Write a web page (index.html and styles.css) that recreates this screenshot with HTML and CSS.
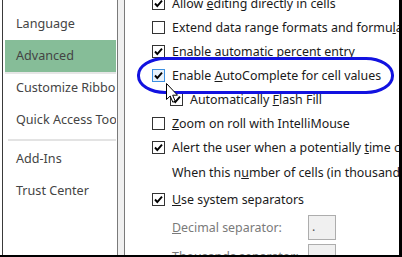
FILE: index.html
```html
<!DOCTYPE html>
<html lang="en">
<head>
    <meta charset="UTF-8">
    <title>Excel Options - Advanced</title>
<link rel="stylesheet" href="styles.css">
</head>
<body>
<div class="window">
    <nav class="nav">
        <div class="nav-item">Language</div>
        <div class="nav-item active">Advanced</div>
        <div class="nav-item">Customize Ribbon</div>
        <div class="nav-item">Quick Access Toolbar</div>
        <div class="nav-sep"></div>
        <div class="nav-item">Add-Ins</div>
        <div class="nav-item">Trust Center</div>
    </nav>
    <div class="split"></div>
    <main class="content">
        <div class="options">
            <div class="row">
                <svg class="box" viewBox="0 0 13 13"><rect x="0.5" y="0.5" width="12" height="12"/><path d="M3 6.5 L5.3 9 L10 3.6"/></svg>
                <span>Allow <u>e</u>diting directly in cells</span>
            </div>
            <div class="row">
                <svg class="box" viewBox="0 0 13 13"><rect x="0.5" y="0.5" width="12" height="12"/></svg>
                <span>Extend data range formats and formu<u>l</u>as</span>
            </div>
            <div class="row">
                <svg class="box" viewBox="0 0 13 13"><rect x="0.5" y="0.5" width="12" height="12"/><path d="M3 6.5 L5.3 9 L10 3.6"/></svg>
                <span>Enable automat<u>i</u>c percent entry</span>
            </div>
            <div class="row">
                <svg class="box hover" viewBox="0 0 13 13"><rect x="0.5" y="0.5" width="12" height="12"/><path d="M3 6.5 L5.3 9 L10 3.6"/></svg>
                <span>Enable <u>A</u>utoComplete for cell values</span>
            </div>
            <div class="row sub">
                <svg class="box" viewBox="0 0 13 13"><rect x="0.5" y="0.5" width="12" height="12"/><path d="M3 6.5 L5.3 9 L10 3.6"/></svg>
                <span>Automatically <u>F</u>lash Fill</span>
            </div>
            <div class="row">
                <svg class="box" viewBox="0 0 13 13"><rect x="0.5" y="0.5" width="12" height="12"/></svg>
                <span><u>Z</u>oom on roll with IntelliMouse</span>
            </div>
            <div class="row">
                <svg class="box" viewBox="0 0 13 13"><rect x="0.5" y="0.5" width="12" height="12"/><path d="M3 6.5 L5.3 9 L10 3.6"/></svg>
                <span>Alert the user when a potentially <u>t</u>ime consuming operation occurs</span>
            </div>
            <div class="row tall plain">
                <span>When this n<u>u</u>mber of cells (in thousands) is affected:</span>
            </div>
            <div class="row tall">
                <svg class="box" viewBox="0 0 13 13"><rect x="0.5" y="0.5" width="12" height="12"/><path d="M3 6.5 L5.3 9 L10 3.6"/></svg>
                <span><u>U</u>se system separators</span>
            </div>
            <div class="row field plain">
                <span class="label"><u>D</u>ecimal separator:</span>
                <div class="textbox">.</div>
            </div>
            <div class="row field plain">
                <span class="label">T<u>h</u>ousands separator:</span>
                <div class="textbox">,</div>
            </div>
        </div>
        <div class="highlight"></div>
        <svg class="cursor" width="13" height="21" viewBox="0 0 13 21"><path d="M0.5 0.5 L0.5 16.5 L4.2 13 L6.8 19.2 L9.2 18.2 L6.7 12.2 L11.5 12.2 Z"/></svg>
    </main>
</div>
</body>
</html>
```

FILE: styles.css
```css
body{
    margin: 0;
    background-color: #fff;
    font-family: 'Noto Sans', 'Open Sans', sans-serif;
    font-size: 12.4px;
    color: #1a1a1a;
}
.window{
    width: 402px;
    height: 257px;
    box-sizing: border-box;
    display: flex;
    padding-left: 2px;
    border-right: 3px solid #000;
    border-bottom: 2px solid #000;
    overflow: hidden;
}
.nav{
    width: 114px;
    flex: none;
    border-left: 1px solid #3a3a3a;
    padding-top: 8px;
    white-space: nowrap;
    overflow: hidden;
    font-size: 12.6px;
}
.nav-item{
    height: 32px;
    line-height: 32px;
    margin: 0 1px 0 2px;
    padding-left: 11px;
    color: #444;
    overflow: hidden;
}
.nav-item.active{
    background-color: #86bd98;
    box-shadow: 0 2px 0 #e6e6e6;
}
.nav-sep{
    height: 2px;
    margin: 3px 1px 2px 5px;
    background-color: #e3e3e3;
}
.split{
    width: 6px;
    flex: none;
    background-color: #f0f0f0;
    border-left: 1px solid #7a7a7a;
    border-right: 1px solid #7a7a7a;
}
.content{
    flex: 1;
    position: relative;
    overflow: hidden;
}
.options{
    margin-top: -9px;
    padding-left: 27px;
    white-space: nowrap;
}
.row{
    height: 24px;
    display: flex;
    align-items: center;
    gap: 7px;
}
.row.sub{
    padding-left: 18px;
}
.row.tall{
    height: 27px;
}
.row.plain{
    padding-left: 20px;
}
.row.field{
    height: 29px;
}
.box{
    width: 13px;
    height: 13px;
    flex: none;
}
.box rect{
    fill: #fff;
    stroke: #333;
}
.box path{
    fill: none;
    stroke: #000;
    stroke-width: 1.9;
}
.box.hover rect{
    fill: #e8f2fc;
    stroke: #3c8fe0;
}
.label{
    width: 129px;
    color: #7a7a7a;
}
.textbox{
    width: 28px;
    height: 25px;
    flex: none;
    box-sizing: border-box;
    border: 1px solid #adadad;
    background-color: #f0f0f0;
    padding-left: 3px;
    line-height: 22px;
    color: #555;
}
.highlight{
    position: absolute;
    left: 12px;
    top: 57px;
    width: 251px;
    height: 31px;
    border: 3px solid #1212e0;
    border-radius: 28px / 18px;
}
.cursor{
    position: absolute;
    left: 41px;
    top: 83px;
}
.cursor path{
    fill: #fff;
    stroke: #000;
    stroke-width: 1;
}
```
